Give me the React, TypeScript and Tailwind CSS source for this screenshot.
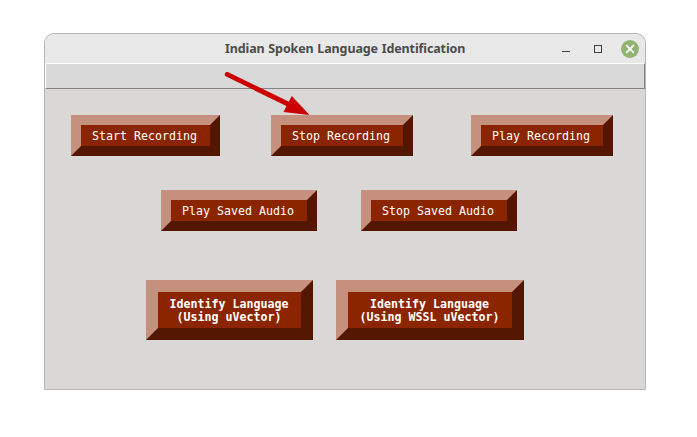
import type { ReactNode } from "react";

const bevel =
  "box-border flex shrink-0 items-center justify-center whitespace-pre bg-[#8b2500] text-center text-white border-t-[#c5917e] border-l-[#c5917e] border-r-[#531600] border-b-[#531600] font-['DejaVu_Sans_Mono','Liberation_Mono',monospace] text-[11.63px] leading-[13px]";

function Action({ width, children }: { width: string; children: ReactNode }) {
  return <button className={`${bevel} ${width} h-[41px] border-[10px] pt-px pr-[2px]`}>{children}</button>;
}

function Identify({ width, children }: { width: string; children: ReactNode }) {
  return <button className={`${bevel} ${width} h-[60px] border-[12px] pt-px pr-px font-bold`}>{children}</button>;
}

function TitleBar() {
  return (
    <header className="flex h-[29px] items-center bg-[#e8e8e8] pr-[6px]">
      <div className="w-[180px] shrink-0" />
      <h1 className="w-[244px] shrink-0 whitespace-nowrap font-['Noto_Sans','Open_Sans',sans-serif] text-[12.5px] font-bold leading-[29px] tracking-[-0.11px] [word-spacing:0.6px] text-[#4c4c4c]">
        Indian Spoken Language Identification
      </h1>
      <svg className="ml-auto h-[18px] w-[78px] shrink-0" viewBox="0 0 78 18" fill="none">
        <path d="M1 11.5h8" stroke="#404040" />
        <rect x="33.5" y="5.5" width="7" height="7" stroke="#404040" />
        <circle cx="69" cy="9" r="9" fill="#92b372" />
        <path d="m65.2 5.2 7.6 7.6m0-7.6-7.6 7.6" stroke="#fff" strokeWidth="1.7" />
      </svg>
    </header>
  );
}

export default function App() {
  return (
    <div className="relative h-[437px] w-[697px] overflow-hidden bg-white pl-[44px] pt-[33px]">
      <main className="box-border flex h-[357px] w-[602px] flex-col overflow-hidden rounded-t-[10px] border border-[#b6b6b6] bg-[#d9d8d6]">
        <TitleBar />
        <div className="box-border h-[26px] shrink-0 border border-t-white border-l-white border-r-[#828282] border-b-[#828282] bg-[#d9d9d9]" />
        <div className="flex pl-[26px] pt-[26px]">
          <Action width="w-[149px] mr-[51px]">Start Recording</Action>
          <Action width="w-[142px] mr-[58px]">Stop Recording</Action>
          <Action width="w-[142px]">Play Recording</Action>
        </div>
        <div className="flex gap-[44px] pl-[116px] pt-[34px]">
          <Action width="w-[156px]">Play Saved Audio</Action>
          <Action width="w-[156px]">Stop Saved Audio</Action>
        </div>
        <div className="flex gap-[23px] pl-[101px] pt-[49px]">
          <Identify width="w-[167px]">{"Identify Language\n(Using uVector)"}</Identify>
          <Identify width="w-[188px]">{"Identify Language\n(Using WSSL uVector)"}</Identify>
        </div>
      </main>
      <svg className="pointer-events-none absolute left-[220px] top-[68px] h-[50px] w-[94px]" viewBox="220 68 94 50">
        <path d="M227.2 74.4 290 105" stroke="#cc0000" strokeWidth="4.8" strokeLinecap="round" />
        <path d="M309.5 115 291.8 96 283.5 112Z" fill="#cc0000" />
      </svg>
    </div>
  );
}
